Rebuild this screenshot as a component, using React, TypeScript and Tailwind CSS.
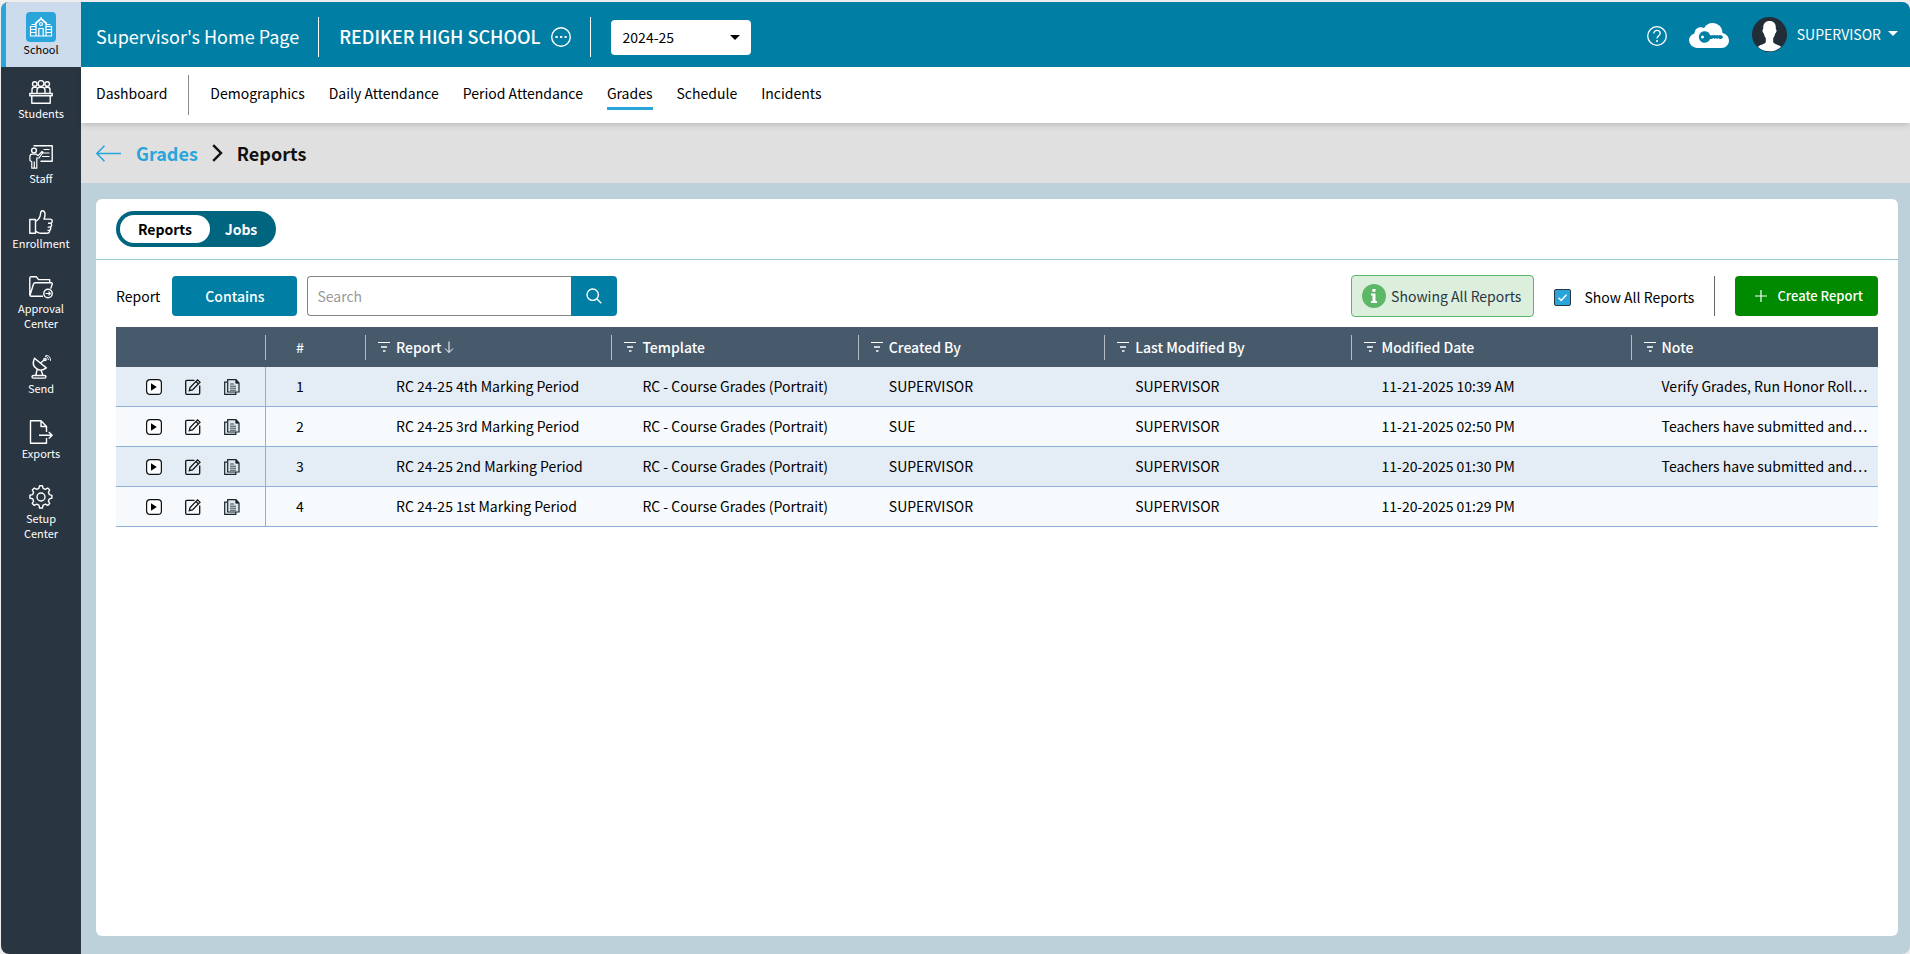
import { ReactNode } from "react";

type IconProps = { className?: string };

function Glyph({ children }: { children: ReactNode }) {
  return (
    <svg
      viewBox="0 0 24 24"
      fill="none"
      stroke="currentColor"
      strokeWidth="1.4"
      strokeLinejoin="round"
      className="size-6"
      aria-hidden="true"
    >
      {children}
    </svg>
  );
}

const SchoolIcon = () => (
  <svg viewBox="0 0 30 30" fill="none" stroke="#fff" strokeWidth="1.2" className="size-[30px] rounded bg-[#2aa5da]" aria-hidden="true">
    <path d="M10 24V11.500L15 7l5 4.500V24M9 11.500l6-5.300 6 5.300M15 6.200V5" />
    <path d="M10 14.500H4.500V24h21v-9.500H20M4.500 17.500H10M4.500 20.500H10M20 17.500h5.500M20 20.500h5.500M5.500 12.500H10M20 12.500h4.500" />
    <path d="M12.800 24v-7.500h4.400V24" />
    <circle cx="15" cy="12" r="1.5" />
  </svg>
);

const StudentsIcon = () => (
  <Glyph>
    <path d="M.8 13.500h22.400v2.200H.8zM2.800 15.700v7.500h18.400v-7.500" />
    <circle cx="12" cy="3.500" r="2.900" />
    <circle cx="5.800" cy="4" r="2.300" />
    <circle cx="18.200" cy="4" r="2.300" />
    <path d="M8 13.500V10c0-1.800 1.300-2.800 2.800-2.800h2.400c1.500 0 2.800 1 2.800 2.800v3.500M3 13.500v-4c0-1.400 1-2.300 2.300-2.300h2.500M21 13.500v-4c0-1.400-1-2.300-2.300-2.300h-2.500" />
  </Glyph>
);

const StaffIcon = () => (
  <Glyph>
    <path d="M5 1.200V.8h18.200v15.400H11.500" />
    <path d="M14.500 4.500h6M13.500 8h7M13 11.500h7.500" strokeWidth="1.1" />
    <circle cx="5" cy="5.500" r="2.400" />
    <path d="M2.800 23.200v-6.500L.9 15.500v-3.800c0-1.600 1-2.500 2.400-2.500h4l1.800 1.500L13 6.500l1 .8-4 5.700H7.800v10.200zM5.300 16.500v6.500" strokeWidth="1.2" />
  </Glyph>
);

const EnrollmentIcon = () => (
  <Glyph>
    <path d="M.8 9.500h5.700v13.700H.8z" />
    <path d="M6.500 11.500c3.300-1.800 4.700-4.500 5-7.500.1-2 .6-3.300 1.900-3.300 1.700 0 2.600 1.700 2.600 3.800 0 1.800-.5 3.300-1 4.600h6c1.400 0 2.200 1 2.200 2.100s-.7 1.800-1.500 2.100c.9.500 1.100 1.300.9 2.100-.2.900-.8 1.500-1.500 1.700.7.500.8 1.200.6 1.900-.2.800-.8 1.300-1.500 1.400.4.400.5.900.3 1.400-.3.900-1.100 1.400-2.500 1.400H12c-2.200 0-3.500-1.200-5.500-1.700M19 13.300h3M18.700 17.100h2.500M18.500 20.400h2" />
  </Glyph>
);

const ApprovalIcon = () => (
  <Glyph>
    <path d="M14 21.200H2.300C1.300 21.200.8 20.500.8 19.700V3.300c0-1 .6-1.500 1.500-1.500h5.200l2 2.800h11.200v3.200M1 20.200 4.500 9c.3-.8.800-1.200 1.600-1.200h16.200c.8 0 1.100.6.900 1.300l-1.500 4.500" />
    <circle cx="19" cy="18.500" r="4.200" />
    <path d="M16.500 18.500h4.800M19.500 16.700l1.800 1.800-1.800 1.800" strokeWidth="1.2" />
  </Glyph>
);

const SendIcon = () => (
  <Glyph>
    <path d="M5.500 3.200c-2 4.300-1.200 8.300 2 10.500 3 2 6.800 1.600 9.800-.8zM11.500 8l4-3.300" />
    <circle cx="16" cy="4.500" r="1.100" />
    <path d="M16 1.500c2.200 0 3.300 1.300 3.300 3.500M16.500.3c3.400 0 5.200 2 5 5.500" strokeWidth="1" />
    <path d="M8.300 14 6.700 20.500M12 15l2 5.500M4.500 20.500h11c1 0 1.500.6 1.500 1.300s-.5 1.300-1.500 1.300h-11c-1 0-1.500-.6-1.500-1.300s.5-1.300 1.500-1.300z" />
  </Glyph>
);

const ExportsIcon = () => (
  <Glyph>
    <path d="M17.500 12V6.500L12 .8H1.500v22.400h16V18M12 .8v5.700h5.500M10 15.200h13M19.800 11.900l3.300 3.300-3.300 3.300" />
  </Glyph>
);

const SetupIcon = () => (
  <Glyph>
    <path d="M9.900 3.300 10.600.8h2.800l.7 2.500 2.300 1 2.300-1.300 2 2-1.300 2.300 1 2.300 2.500.7v2.800l-2.500.7-1 2.300 1.300 2.300-2 2-2.300-1.300-2.300 1-.7 2.900h-2.800l-.7-2.900-2.300-1-2.300 1.300-2-2 1.300-2.300-1-2.300-2.700-.7v-2.800l2.700-.7 1-2.300L3.300 5l2-2 2.300 1.300z" />
    <circle cx="12" cy="12" r="4" />
  </Glyph>
);

const FilterIcon = () => (
  <svg viewBox="0 0 12 10" className="h-[10px] w-3 shrink-0" stroke="currentColor" aria-hidden="true">
    <path d="M0 .5h12" />
    <path d="M3 5h6M5 9h2.500" strokeWidth="1.600" />
  </svg>
);

const PlayIcon = () => (
  <svg viewBox="0 0 16 16" className="size-4" aria-hidden="true">
    <rect x=".6" y=".6" width="14.8" height="14.8" rx="3.5" fill="#fff" stroke="#111" strokeWidth="1.2" />
    <path d="M5 4.200 10.800 8 5 11.800z" />
  </svg>
);

const EditIcon = () => (
  <svg viewBox="0 0 16 16" className="size-4" fill="none" stroke="#111" strokeWidth="1.3" aria-hidden="true">
    <path d="M9.500 1.300H1.700a1 1 0 0 0-1 1v12a1 1 0 0 0 1 1h12a1 1 0 0 0 1-1V6.500" />
    <path d="m4.300 11.700.8-3.200L12.500.9 15 3.300l-7.500 7.600zM11 2.500l2.400 2.400" />
  </svg>
);

const CopyIcon = () => (
  <svg viewBox="0 0 16 16" className="size-4" fill="#dde6ec" stroke="#17242b" strokeWidth="1.2" aria-hidden="true">
    <path d="M3.500 3.200H.7v12.100h11.100V13" />
    <path d="M3.700.7h8.300l3 3.300v9H3.700z" />
    <path d="M11.800 1v3.200H15z" fill="#17242b" strokeWidth=".8" />
    <path d="M6 5h4M6 7.200h6M6 9.200h6M6 11.200h6" strokeWidth=".8" />
  </svg>
);

const HelpIcon = () => (
  <svg viewBox="0 0 20 20" className="size-5" fill="none" stroke="#fff" strokeWidth="1.3" aria-hidden="true">
    <circle cx="10" cy="10" r="9.300" />
    <path d="M6.800 7.600C6.800 5.500 8.200 4.300 10 4.300s3.200 1.200 3.200 3c0 2.400-3.200 2.500-3.200 5.200" />
    <circle cx="10" cy="15" r=".4" fill="#fff" />
  </svg>
);

const CloudKeyIcon = () => (
  <svg viewBox="0 0 40 25" className="h-[25px] w-10" aria-hidden="true">
    <path
      d="M8 25a8 8 0 0 1-8-7.500c0-3.200 2.200-6 5.500-7C5.500 6.500 8.500 4.200 11.500 4.200c1.300 0 2.600.3 3.500 1C16.500 2 19.800 0 23.500 0 29.200 0 33.500 4.300 33.500 10c3.700.8 6.500 3.800 6.500 7.500C40 21.700 36.700 25 32.500 25z"
      fill="#fff"
    />
    <path
      d="M15.800 8.200a5.800 5.800 0 1 0 5.300 7.800h1.900l1.200-1 1.200 1 1.300-1 1.300 1 1.200-1 1.200 1h2l1.800-2-1.600-1.700H21.100a5.800 5.800 0 0 0-5.300-4.100zm-2.300 4.200a1.500 1.500 0 1 1 0 3 1.500 1.500 0 0 1 0-3z"
      fill="#007ea3"
      fillRule="evenodd"
    />
  </svg>
);

const Avatar = () => (
  <svg viewBox="0 0 36 36" className="size-[35px]" aria-hidden="true">
    <circle cx="18" cy="18" r="18" fill="#222d38" />
    <path
      d="M18 4c4.200 0 6.500 2.600 6.500 6.500v2c.9.200.9 1.500.5 2.700-.3 1-.7 1.600-1.200 1.700-.3 2-1.100 3.600-2 4.600v4c0 2.500 5.500 3 8.200 5A17 17 0 0 1 18 35.300a17 17 0 0 1-12-4.800c2.700-2 8.200-2.500 8.200-5v-4c-.9-1-1.700-2.600-2-4.600-.5-.1-.9-.7-1.200-1.700-.4-1.200-.4-2.500.5-2.700v-2C11.700 6.600 13.800 4 18 4z"
      fill="#fff"
    />
  </svg>
);

const Caret = ({ className }: IconProps) => (
  <svg viewBox="0 0 10 5" className={className} fill="currentColor" aria-hidden="true">
    <path d="M0 0h10L5 5z" />
  </svg>
);

const sidebarItems = [
  { label: "Students", icon: <StudentsIcon /> },
  { label: "Staff", icon: <StaffIcon /> },
  { label: "Enrollment", icon: <EnrollmentIcon /> },
  { label: "Approval Center", icon: <ApprovalIcon /> },
  { label: "Send", icon: <SendIcon /> },
  { label: "Exports", icon: <ExportsIcon /> },
  { label: "Setup Center", icon: <SetupIcon /> },
];

const tabs = ["Demographics", "Daily Attendance", "Period Attendance", "Grades", "Schedule", "Incidents"];

const columns = ["Report", "Template", "Created By", "Last Modified By", "Modified Date", "Note"];

const reports = [
  {
    name: "RC 24-25 4th Marking Period",
    template: "RC - Course Grades (Portrait)",
    createdBy: "SUPERVISOR",
    modifiedBy: "SUPERVISOR",
    modified: "11-21-2025 10:39 AM",
    note: "Verify Grades, Run Honor Roll…",
  },
  {
    name: "RC 24-25 3rd Marking Period",
    template: "RC - Course Grades (Portrait)",
    createdBy: "SUE",
    modifiedBy: "SUPERVISOR",
    modified: "11-21-2025 02:50 PM",
    note: "Teachers have submitted and…",
  },
  {
    name: "RC 24-25 2nd Marking Period",
    template: "RC - Course Grades (Portrait)",
    createdBy: "SUPERVISOR",
    modifiedBy: "SUPERVISOR",
    modified: "11-20-2025 01:30 PM",
    note: "Teachers have submitted and…",
  },
  {
    name: "RC 24-25 1st Marking Period",
    template: "RC - Course Grades (Portrait)",
    createdBy: "SUPERVISOR",
    modifiedBy: "SUPERVISOR",
    modified: "11-20-2025 01:29 PM",
    note: "",
  },
];

function Sidebar() {
  return (
    <nav aria-label="Modules" className="flex w-20 shrink-0 flex-col bg-[#293541] text-center text-[11px] leading-[15px] text-white">
      <a href="#school" className="flex h-[65px] flex-col items-center border-l-[5px] border-[#2aa5da] bg-[#cddcec] pt-[10px] pr-[5px] text-black">
        <SchoolIcon />
        School
      </a>
      {sidebarItems.map((item) => (
        <a key={item.label} href={`#${item.label}`} className="flex flex-col items-center gap-[2px] px-3 pt-[13px] pb-[11px]">
          {item.icon}
          {item.label}
        </a>
      ))}
    </nav>
  );
}

function TopBar() {
  return (
    <header className="flex h-[65px] items-center bg-[#007ea3] pr-3 pl-[15px] text-white">
      <div className="flex items-center pt-[5px]">
        <h1 className="pb-[2px] text-lg">Supervisor's Home Page</h1>
        <span className="mr-5 ml-[19px] h-10 w-px bg-white" />
        <span className="pb-[2px] text-lg font-medium">REDIKER HIGH SCHOOL</span>
        <button type="button" aria-label="More schools" className="ml-[10px]">
          <svg viewBox="0 0 20 20" className="size-5" fill="none" stroke="#fff" strokeWidth="1.4">
            <circle cx="10" cy="10" r="9.300" />
            <path d="M4.500 10h2.200M9 10h2.200M13.500 10h2.200" strokeWidth="2" />
          </svg>
        </button>
        <span className="mr-5 ml-[19px] h-10 w-px bg-white" />
        <div className="relative">
          <select aria-label="School year" className="block h-[35px] w-[140px] appearance-none rounded bg-white px-3 text-sm text-black">
            <option>2024-25</option>
          </select>
          <Caret className="pointer-events-none absolute top-[15px] right-[11px] h-[5px] w-[10px] text-black" />
        </div>
      </div>
      <div className="ml-auto flex items-center">
        <button type="button" aria-label="Help" className="pt-[3px]">
          <HelpIcon />
        </button>
        <button type="button" aria-label="Cloud access" className="ml-[22px] pt-[2px]">
          <CloudKeyIcon />
        </button>
        <span className="ml-[23px]">
          <Avatar />
        </span>
        <button type="button" className="ml-[10px] flex items-center gap-[7px] pb-[2px] text-sm">
          SUPERVISOR
          <Caret className="h-[5px] w-[10px]" />
        </button>
      </div>
    </header>
  );
}

function TabBar() {
  return (
    <nav aria-label="School pages" className="relative z-10 flex h-14 items-center bg-white pl-[15px] text-sm text-black shadow-md">
      <a href="#dashboard" className="pb-1">Dashboard</a>
      <span className="mx-[21px] h-10 w-px bg-[#8a8a8a]" />
      <div className="flex gap-6 pb-px">
        {tabs.map((tab) => (
          <a
            key={tab}
            href={`#${tab}`}
            className={
              tab === "Grades"
                ? "border-b-[3px] border-[#2aa5da] py-1"
                : "border-b-[3px] border-transparent py-1"
            }
          >
            {tab}
          </a>
        ))}
      </div>
    </nav>
  );
}

function Breadcrumb() {
  return (
    <div className="flex h-[60px] items-center bg-[#e0e0e0] pl-[15px] text-lg font-bold">
      <a href="#back" aria-label="Back" className="text-[#2aa5da]">
        <svg viewBox="0 0 26 17" className="h-[17px] w-[26px]" fill="none" stroke="currentColor" strokeWidth="1.5">
          <path d="M25 8.500H1M8.500.8.900 8.500l7.600 7.700" />
        </svg>
      </a>
      <a href="#grades" className="ml-[14px] text-[#2aa5da]">Grades</a>
      <svg viewBox="0 0 11 18" className="mx-[14px] h-[18px] w-[11px]" fill="none" stroke="#111" strokeWidth="2.4" aria-hidden="true">
        <path d="m1.200 1.200 7.800 7.800-7.800 7.800" />
      </svg>
      <span className="text-[#111]">Reports</span>
    </div>
  );
}

function Toolbar() {
  return (
    <div className="flex h-[67px] items-center px-5 pt-[5px] text-sm text-black">
      <label htmlFor="report-search" className="pb-px">Report</label>
      <button type="button" className="ml-3 h-10 w-[125px] rounded bg-[#007ea3] font-medium text-white">
        Contains
      </button>
      <div className="ml-[10px] flex">
        <input
          id="report-search"
          type="text"
          placeholder="Search"
          className="h-10 w-[264px] rounded-l border border-r-0 border-[#858585] px-[9px] placeholder:text-[#999]"
        />
        <button type="button" aria-label="Search" className="flex h-10 w-[46px] items-center justify-center rounded-r bg-[#007ea3]">
          <svg viewBox="0 0 16 16" className="size-4" fill="none" stroke="#fff" strokeWidth="1.4">
            <circle cx="6.7" cy="6.7" r="5.7" />
            <path d="m11 11 4.300 4.300" />
          </svg>
        </button>
      </div>

      <div className="ml-auto flex items-center">
        <div className="flex h-[42px] items-center gap-[5px] rounded border border-[#5cb766] bg-[#dcefdd] pr-3 pl-[10px] text-[#293541]">
          <svg viewBox="0 0 24 24" className="size-6" aria-hidden="true">
            <circle cx="12" cy="12" r="12" fill="#5cb766" />
            <path d="M9 9.500h4.500V17H15v2H9v-2h1.500v-5.500H9zM10.300 5h3.200v2.800h-3.200z" fill="#fff" />
          </svg>
          Showing All Reports
        </div>
        <label className="ml-5 flex items-center gap-[13px] pt-[2px]">
          <span className="relative flex">
            <input
              type="checkbox"
              defaultChecked
              className="peer size-[17px] appearance-none rounded-xs border border-[#293541] bg-white checked:bg-[#2aa5da]"
            />
            <svg
              viewBox="0 0 17 17"
              className="pointer-events-none absolute inset-0 hidden size-[17px] peer-checked:block"
              fill="none"
              stroke="#fff"
              strokeWidth="1.5"
            >
              <path d="m4.500 8.800 2.700 2.700 5.300-5.700" />
            </svg>
          </span>
          Show All Reports
        </label>
        <span className="mx-5 h-10 w-px bg-[#666]" />
        <button type="button" className="flex h-10 items-center gap-[10px] rounded bg-[#008a00] pr-[15px] pl-5 text-[13px] font-medium text-white">
          <svg viewBox="0 0 12 12" className="size-3" stroke="currentColor" strokeWidth="1.2">
            <path d="M6 0v12M0 6h12" />
          </svg>
          Create Report
        </button>
      </div>
    </div>
  );
}

function ReportsTable() {
  return (
    <div className="px-5">
      <table className="w-full table-fixed border-separate border-spacing-0 text-left text-sm text-black">
        <colgroup>
          <col className="w-[150px]" />
          <col className="w-[100px]" />
          <col />
          <col />
          <col />
          <col />
          <col className="w-[280px]" />
          <col />
        </colgroup>
        <thead className="bg-[#475a6b] text-white">
          <tr className="h-10">
            <th className="p-0" aria-label="Actions">
              <div className="h-[25px] border-r border-[#b5bdc4]" />
            </th>
            <th className="p-0 font-medium">
              <div className="flex h-[25px] items-center border-r border-[#b5bdc4] pl-[30px]">#</div>
            </th>
            {columns.map((column) => (
              <th key={column} className="group p-0 font-medium">
                <div className="flex h-[25px] items-center border-r border-[#b5bdc4] pl-3 group-last:border-0">
                  <FilterIcon />
                  <span className="ml-[6px]">{column}</span>
                  {column === "Report" && (
                    <svg viewBox="0 0 10 12" className="ml-[2px] h-3 w-[10px]" fill="none" stroke="currentColor" aria-hidden="true">
                      <path d="M5 .5v11M1 7.500l4 4 4-4" />
                    </svg>
                  )}
                </div>
              </th>
            ))}
          </tr>
        </thead>
        <tbody className="[&_td]:h-10 [&_td]:border-b [&_td]:border-[#8bb0d8]">
          {reports.map((report, index) => (
            <tr key={report.name} className="odd:bg-[#e4ecf6] even:bg-[#f6fafd]">
              <td className="border-r p-0">
                <div className="flex gap-[23px] pl-[30px]">
                  <button type="button" aria-label={`Run ${report.name}`}>
                    <PlayIcon />
                  </button>
                  <button type="button" aria-label={`Edit ${report.name}`}>
                    <EditIcon />
                  </button>
                  <button type="button" aria-label={`Copy ${report.name}`}>
                    <CopyIcon />
                  </button>
                </div>
              </td>
              <td className="p-0 pb-[2px] pl-[30px]">{index + 1}</td>
              <td className="p-0 pb-[2px] pl-[30px]">{report.name}</td>
              <td className="p-0 pb-[2px] pl-[30px]">{report.template}</td>
              <td className="p-0 pb-[2px] pl-[30px]">{report.createdBy}</td>
              <td className="p-0 pb-[2px] pl-[30px]">{report.modifiedBy}</td>
              <td className="p-0 pb-[2px] pl-[30px]">{report.modified}</td>
              <td className="truncate p-0 pb-[2px] pl-[30px]">{report.note}</td>
            </tr>
          ))}
        </tbody>
      </table>
    </div>
  );
}

export default function App() {
  return (
    <div className="flex min-h-screen bg-[#eeeeee] pt-[2px] pl-px font-['Noto_Sans_CJK_SC','Open_Sans',sans-serif]">
      <div className="flex flex-1 overflow-hidden rounded-lg">
        <Sidebar />
        <div className="flex min-w-0 flex-1 flex-col bg-[#bdd1da]">
          <TopBar />
          <TabBar />
          <Breadcrumb />
          <main className="flex flex-1 pt-4 pr-3 pb-[18px] pl-[15px]">
            <section className="min-w-0 flex-1 rounded-md bg-white">
              <div className="border-b border-[#99c9d5] px-5 py-3">
                <div className="inline-flex h-9 rounded-full bg-[#00657f] p-1 align-top text-sm font-bold">
                  <button type="button" className="w-[90px] rounded-full bg-white text-black">
                    Reports
                  </button>
                  <button type="button" className="w-[62px] text-white">
                    Jobs
                  </button>
                </div>
              </div>
              <Toolbar />
              <ReportsTable />
            </section>
          </main>
        </div>
      </div>
    </div>
  );
}
